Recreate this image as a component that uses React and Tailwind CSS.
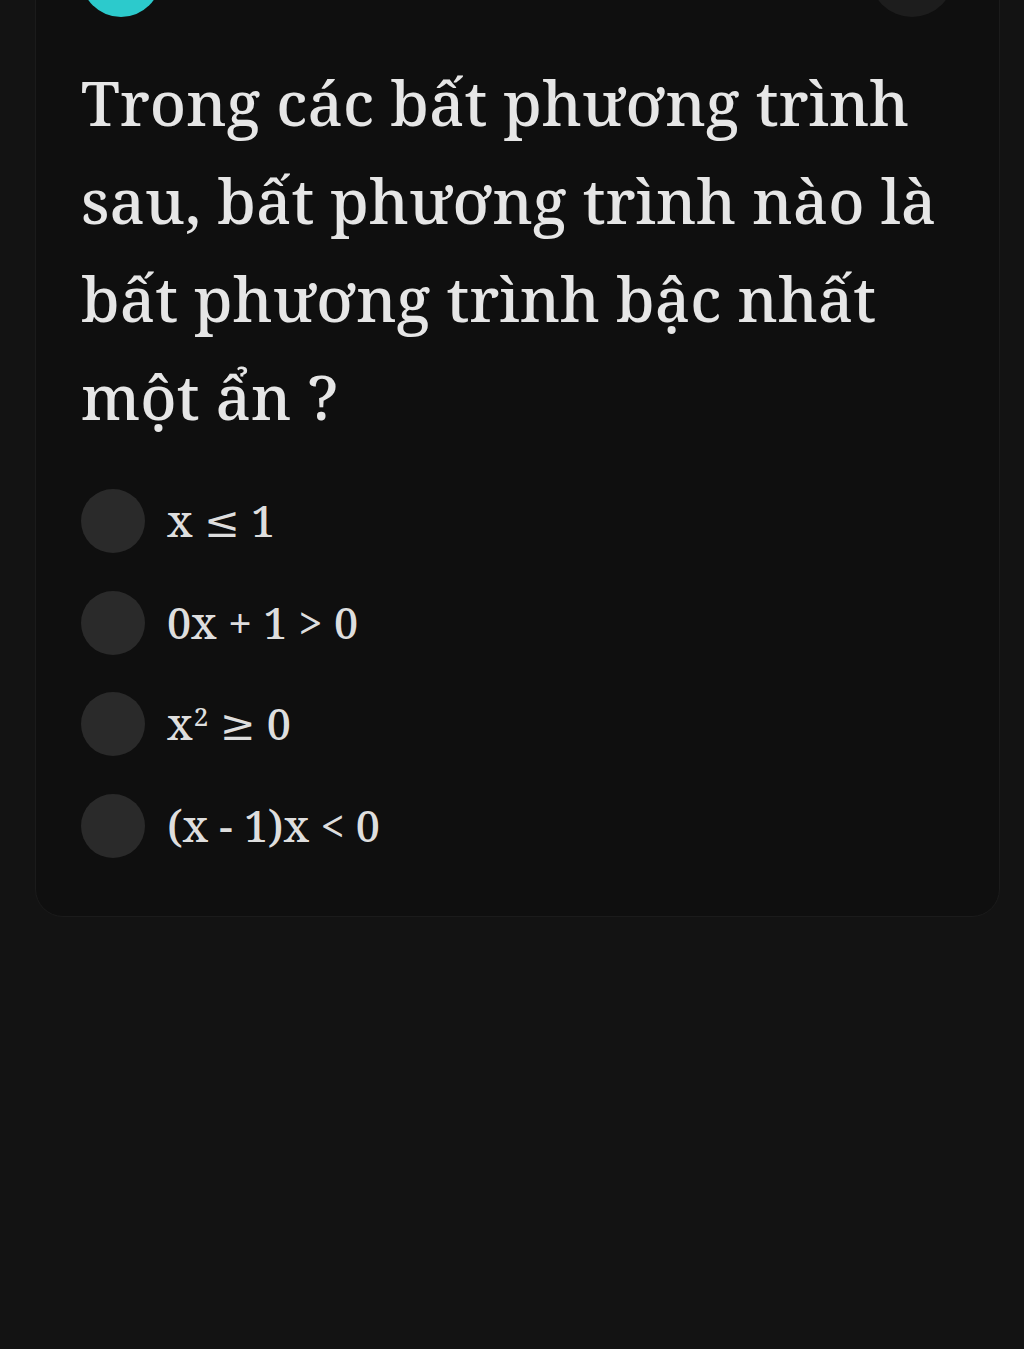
import React from 'react';

const options = [
    { id: 'a', label: <>x ≤ 1</> },
    { id: 'b', label: <>0x + 1 &gt; 0</> },
    { id: 'c', label: <>x<sup className="text-[26px] relative -top-[14px] ml-[1px]">2</sup> ≥ 0</> },
    { id: 'd', label: <>(x - 1)x &lt; 0</> },
];

function QuestionCard() {
    return (
        <div className="ml-[35px] mr-[24px] -mt-[60px] rounded-[28px] border border-[#1b1b1b] bg-[#0f0f0f] pl-[45px] pr-[45px] pb-[58px]">
            {/* top row: progress dot + menu dot, cut off by the viewport */}
            <div className="flex justify-between items-end h-[76px]">
                <div className="w-[80px] h-[80px] rounded-full bg-[#2ccacc]"></div>
                <div className="w-[84px] h-[84px] rounded-full bg-[#1d1d1d]"></div>
            </div>
            <h1 className="mt-[36px] text-[62px] leading-[98px] font-medium text-[#e6e6e6] font-['Noto_Serif','DejaVu_Serif',serif]">
                Trong các bất phương trình sau, bất phương trình nào là bất phương trình bậc nhất một ẩn ?
            </h1>
            <div className="mt-[44px] flex flex-col gap-[37px]">
                {options.map((opt) => (
                    <label key={opt.id} className="flex items-center gap-[22px]">
                        <span className="w-[64px] h-[64px] rounded-full bg-[#2a2a2a] shrink-0"></span>
                        <span className="text-[43px] font-medium text-[#dedede] font-['Noto_Serif','DejaVu_Serif',serif]">{opt.label}</span>
                    </label>
                ))}
            </div>
        </div>
    );
}

export default function App() {
    return (
        <div className="min-h-[1349px] bg-[#131313] overflow-hidden">
            <QuestionCard />
        </div>
    );
}
